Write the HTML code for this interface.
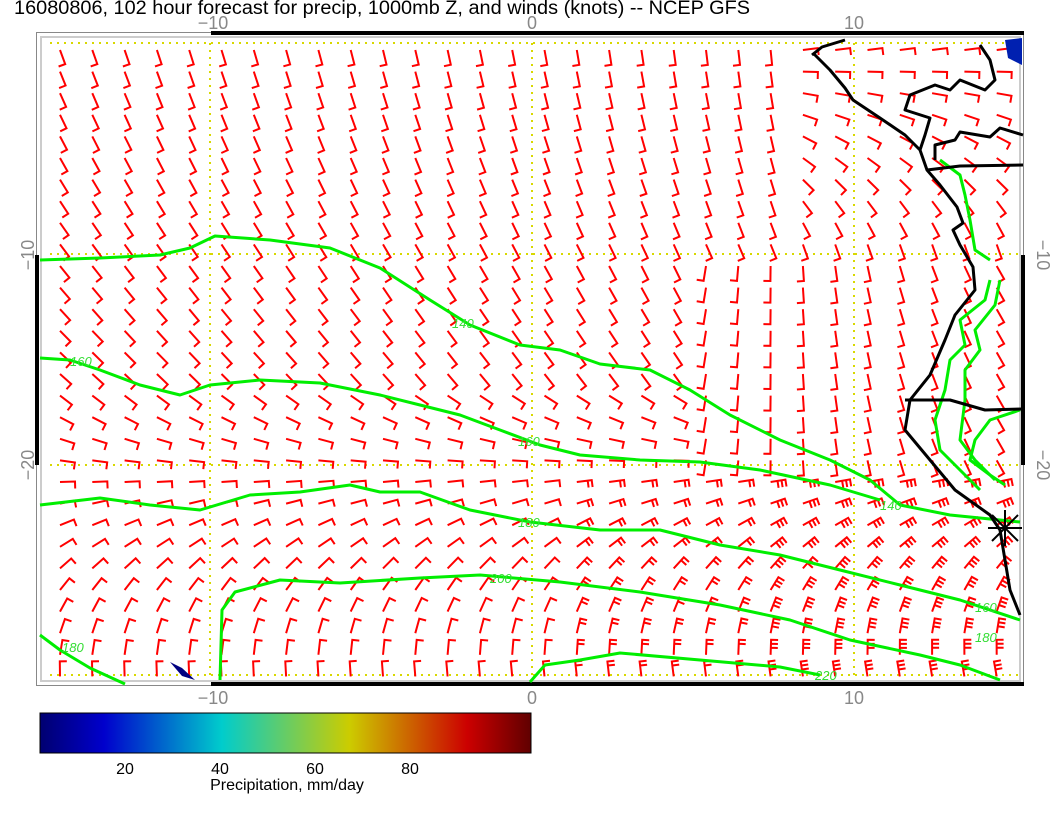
<!DOCTYPE html>
<html><head><meta charset="utf-8"><style>
html,body{margin:0;padding:0;background:#fff;width:1056px;height:816px;overflow:hidden}
svg{position:absolute;left:0;top:0}
text{font-family:"Liberation Sans",sans-serif}
</style></head><body>
<svg id="s" width="1056" height="816" xmlns="http://www.w3.org/2000/svg">
<defs><linearGradient id="cb" x1="0" x2="1" y1="0" y2="0">
<stop offset="0" stop-color="#000070"/><stop offset="0.13" stop-color="#0000cc"/>
<stop offset="0.37" stop-color="#00cccc"/><stop offset="0.63" stop-color="#cccc00"/>
<stop offset="0.87" stop-color="#cc0000"/><stop offset="1" stop-color="#600000"/></linearGradient></defs>
<text x="14" y="14" font-size="19" fill="#000" textLength="736" lengthAdjust="spacingAndGlyphs">16080806, 102 hour forecast for precip, 1000mb Z, and winds (knots) -- NCEP GFS</text>
<rect x="36.5" y="32.5" width="987" height="653" fill="none" stroke="#888" stroke-width="1"/>
<rect x="41" y="37" width="979" height="644" fill="none" stroke="#ccc" stroke-width="2"/>
<rect x="211" y="31" width="813" height="4" fill="#000"/>
<rect x="211" y="682" width="813" height="4" fill="#000"/>
<rect x="35" y="255" width="4" height="210" fill="#000"/>
<rect x="1021" y="255" width="4" height="210" fill="#000"/>
<g stroke="#d8d800" stroke-width="2" stroke-dasharray="2,5" fill="none">
<line x1="50" y1="43" x2="1020" y2="43"/><line x1="50" y1="254" x2="1020" y2="254"/>
<line x1="50" y1="465" x2="1020" y2="465"/><line x1="50" y1="675" x2="1020" y2="675"/>
<line x1="210" y1="43" x2="210" y2="675"/><line x1="532" y1="43" x2="532" y2="675"/><line x1="854" y1="43" x2="854" y2="675"/>
</g>
<g fill="#888" font-size="18" text-anchor="middle">
<text x="213" y="29">−10</text><text x="532" y="29">0</text><text x="854" y="29">10</text>
<text x="213" y="704">−10</text><text x="532" y="704">0</text><text x="854" y="704">10</text>
<text transform="translate(34,255) rotate(-90)">−10</text><text transform="translate(34,465) rotate(-90)">−20</text>
<text transform="translate(1037,255) rotate(90)">−10</text><text transform="translate(1037,465) rotate(90)">−20</text>
</g>
<g id="barbs" stroke="#f00" stroke-width="2" fill="none"></g>
<path d="M170,662 L182,668 L195,680 L182,676 Z" fill="#000080"/>
<path d="M1005,40 L1022,38 L1022,65 L1008,58 Z" fill="#0020b0"/>
<g stroke="#00ee00" stroke-width="3" fill="none" stroke-linejoin="round">
<polyline points="40,260 100,258 160,255 190,248 215,236 270,240 330,248 380,268 430,300 470,325 520,345 560,350 600,364 650,370 690,390 730,415 780,440 830,460 870,480 900,505 950,515 1000,520 1020,522"/>
<polyline points="40,358 70,360 100,370 140,385 180,395 210,385 260,380 320,383 380,395 420,405 460,415 500,430 540,445 580,455 640,460 700,462 760,470 830,485 880,500"/>
<polyline points="40,505 100,498 150,505 200,510 250,495 300,492 350,485 380,492 420,492 470,510 530,522 600,530 660,530 720,545 780,555 840,570 900,585 960,600 1020,620"/>
<polyline points="220,680 222,610 235,592 280,580 340,583 420,578 480,575 560,582 640,592 720,605 790,620 850,640 920,655 960,665 1000,680"/>
<polyline points="40,635 60,650 90,668 125,684"/>
<polyline points="530,682 545,665 580,660 620,653 700,660 780,667 820,675"/>
<polyline points="1020,410 990,420 975,440 970,460 990,475 1005,485"/>
<polyline points="990,280 985,300 960,320 965,345 950,360 945,390 935,420 940,450 960,470 980,490"/>
<polyline points="1000,280 995,305 975,330 980,350 965,370 965,400 960,440 975,460 995,480"/>
<polyline points="940,160 960,175 965,195 970,220 975,250 990,260"/>
</g>
<g fill="#33dd33" font-size="13" font-style="italic">
<text x="452" y="328">140</text><text x="70" y="366">160</text><text x="518" y="446">160</text>
<text x="518" y="527">180</text><text x="490" y="583">200</text><text x="62" y="652">180</text>
<text x="880" y="510">140</text><text x="975" y="612">160</text><text x="975" y="642">180</text><text x="815" y="680">220</text>
</g>
<g stroke="#000" stroke-width="3" fill="none" stroke-linejoin="round">
<polyline points="813,53 830,70 845,88 853,100 880,118 905,135 920,150 927,170 940,185 957,207 963,223 953,230 960,245 973,267 975,290 955,315 945,340 930,375 910,400 905,430 930,460 955,490 990,515 1000,530 1005,560 1010,590 1020,615"/>
<polyline points="927,170 960,166 1023,165"/>
<polyline points="905,400 950,400 985,410 1023,409"/>
<polyline points="935,160 935,145 955,140 960,132 990,137 1000,128 1023,135"/>
<polyline points="920,150 925,135 930,118 905,110 910,95 935,85 950,90 960,80 985,90 995,80 990,60 980,45"/>
<polyline points="812,55 822,47 845,40"/>
</g>
<g stroke="#000" stroke-width="2"><line x1="992" y1="515" x2="1018" y2="541"/><line x1="992" y1="541" x2="1018" y2="515"/><line x1="1005" y1="510" x2="1005" y2="546"/><line x1="988" y1="528" x2="1022" y2="528"/></g>
<rect x="40" y="713" width="491" height="40" fill="url(#cb)" stroke="#000" stroke-width="1"/>
<g font-size="16" fill="#000" text-anchor="middle">
<text x="125" y="774">20</text><text x="220" y="774">40</text><text x="315" y="774">60</text><text x="410" y="774">80</text>
<text x="287" y="790">Precipitation, mm/day</text></g>
</svg>
<script>
var g=document.getElementById('barbs'),h='';
for(var r=0;r<30;r++){for(var c=0;c<30;c++){
 var x=60+c*32.3,y=50+r*21.6;
 var t=(y-43)/632, u=(x-40)/980;
 var th;
 if(t<0.55) th=70-30*(t/0.55)+20*u; else th=40-130*((t-0.55)/0.45)-10*u;
 if(x>700&&y<470&&y>250) th=100-40*(x-700)/300;
 if(x>800&&y<250) th=-10+(y-43)*0.4;
 var a=th*Math.PI/180,L=15,ex=x+Math.cos(a)*L,ey=y+Math.sin(a)*L;
 var p=a+Math.PI/2, fx=Math.cos(p)*7, fy=Math.sin(p)*7;
 var d='M'+x.toFixed(1)+','+y.toFixed(1)+'L'+ex.toFixed(1)+','+ey.toFixed(1)+'l'+fx.toFixed(1)+','+fy.toFixed(1);
 if(y>470&&x>560){var bx=x+Math.cos(a)*11,by=y+Math.sin(a)*11;d+='M'+bx.toFixed(1)+','+by.toFixed(1)+'l'+fx.toFixed(1)+','+fy.toFixed(1);
  if(x>760){var cx=x+Math.cos(a)*7,cy=y+Math.sin(a)*7;d+='M'+cx.toFixed(1)+','+cy.toFixed(1)+'l'+fx.toFixed(1)+','+fy.toFixed(1);}}
 h+='<path d="'+d+'"/>';
}}
g.innerHTML=h;
</script>
</body></html>
